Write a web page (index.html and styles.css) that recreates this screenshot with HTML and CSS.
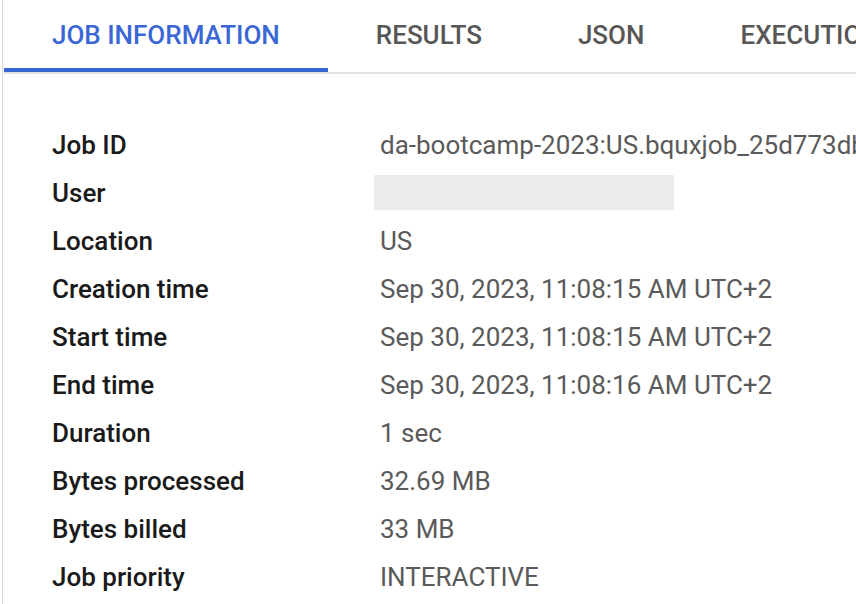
FILE: index.html
```html
<!DOCTYPE html>
<html>
<head>
<meta charset="utf-8">
<link rel="stylesheet" href="styles.css">
</head>
<body>
<div class="panel">
  <div class="tabbar">
    <div class="tab active">JOB INFORMATION</div>
    <div class="tab">RESULTS</div>
    <div class="tab">JSON</div>
    <div class="tab">EXECUTION DETAILS</div>
  </div>
  <div class="info">
    <div class="label">Job ID</div><div class="value">da-bootcamp-2023:US.bquxjob_25d773db_18ae5c3a2b1</div>
    <div class="label">User</div><div class="value"><div class="redacted"></div></div>
    <div class="label">Location</div><div class="value">US</div>
    <div class="label">Creation time</div><div class="value">Sep 30, 2023, 11:08:15 AM UTC+2</div>
    <div class="label">Start time</div><div class="value">Sep 30, 2023, 11:08:15 AM UTC+2</div>
    <div class="label">End time</div><div class="value">Sep 30, 2023, 11:08:16 AM UTC+2</div>
    <div class="label">Duration</div><div class="value">1 sec</div>
    <div class="label">Bytes processed</div><div class="value">32.69 MB</div>
    <div class="label">Bytes billed</div><div class="value">33 MB</div>
    <div class="label">Job priority</div><div class="value">INTERACTIVE</div>
  </div>
</div>
</body>
</html>
```
FILE: styles.css
```css
html, body {
  margin: 0;
  padding: 0;
  background: #ffffff;
  overflow: hidden;
}
body {
  width: 856px;
  height: 604px;
  font-family: Roboto, "Liberation Sans", sans-serif;
}
.panel {
  margin-left: 2px;
  border-left: 1px solid #d9d9d9;
  padding-left: 1px;
  height: 604px;
  box-sizing: border-box;
  overflow: hidden;
}
.tabbar {
  display: flex;
  border-bottom: 2px solid #e2e2e2;
  white-space: nowrap;
  overflow: hidden;
}
.tab {
  flex: none;
  height: 68px;
  line-height: 70px;
  padding: 0 48px;
  border-bottom: 4px solid transparent;
  font-size: 26px;
  font-weight: 500;
  color: #575757;
}
.tab.active {
  color: #3a67d5;
  border-bottom-color: #3a67d5;
}
.info {
  display: grid;
  grid-template-columns: 328px 1fr;
  grid-auto-rows: 48px;
  padding: 47px 0 0 48px;
  font-size: 26px;
  line-height: 48px;
  white-space: nowrap;
}
.label {
  font-weight: 500;
  color: #1a1a1a;
}
.value {
  color: #5a5a5a;
}
.redacted {
  width: 300px;
  height: 35px;
  margin: 6px 0 0 -6px;
  background: #ebebeb;
}
```
